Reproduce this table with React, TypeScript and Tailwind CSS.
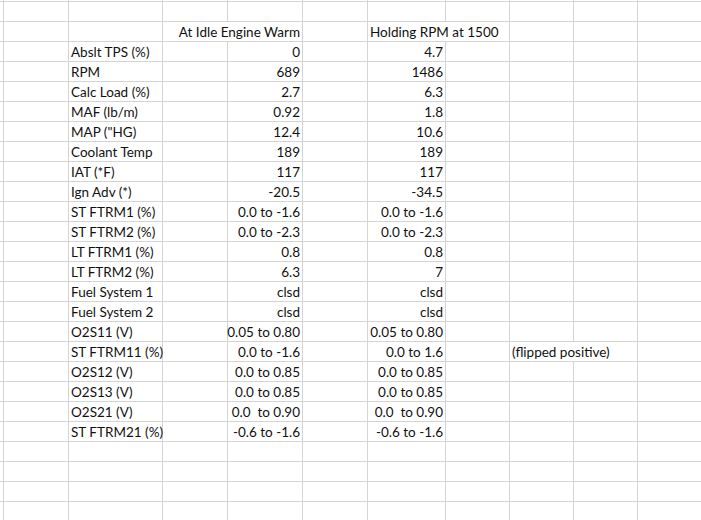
import React from 'react';

// column widths include the 1px right gridline
const COLS = [4, 65, 94, 65, 75, 65, 78, 64, 64, 64, 64];

interface Row {
  label: string;
  idle: string;
  hold: string;
  note?: string;
}

const rows: Row[] = [
  { label: 'Abslt TPS (%)', idle: '0', hold: '4.7' },
  { label: 'RPM', idle: '689', hold: '1486' },
  { label: 'Calc Load (%)', idle: '2.7', hold: '6.3' },
  { label: 'MAF (lb/m)', idle: '0.92', hold: '1.8' },
  { label: 'MAP ("HG)', idle: '12.4', hold: '10.6' },
  { label: 'Coolant Temp', idle: '189', hold: '189' },
  { label: 'IAT (*F)', idle: '117', hold: '117' },
  { label: 'Ign Adv (*)', idle: '-20.5', hold: '-34.5' },
  { label: 'ST FTRM1 (%)', idle: '0.0 to -1.6', hold: '0.0 to -1.6' },
  { label: 'ST FTRM2 (%)', idle: '0.0 to -2.3', hold: '0.0 to -2.3' },
  { label: 'LT FTRM1 (%)', idle: '0.8', hold: '0.8' },
  { label: 'LT FTRM2 (%)', idle: '6.3', hold: '7' },
  { label: 'Fuel System 1', idle: 'clsd', hold: 'clsd' },
  { label: 'Fuel System 2', idle: 'clsd', hold: 'clsd' },
  { label: 'O2S11 (V)', idle: '0.05 to 0.80', hold: '0.05 to 0.80' },
  { label: 'ST FTRM11 (%)', idle: '0.0 to -1.6', hold: '0.0 to 1.6', note: '(flipped positive)' },
  { label: 'O2S12 (V)', idle: '0.0 to 0.85', hold: '0.0 to 0.85' },
  { label: 'O2S13 (V)', idle: '0.0 to 0.85', hold: '0.0 to 0.85' },
  { label: 'O2S21 (V)', idle: '0.0  to 0.90', hold: '0.0  to 0.90' },
  { label: 'ST FTRM21 (%)', idle: '-0.6 to -1.6', hold: '-0.6 to -1.6' },
];

type Cell = { text?: string; align?: 'left' | 'right'; noLine?: boolean };

function SheetRow({ cells, tall = true }: { cells: Cell[]; tall?: boolean }) {
  return (
    <div className={`flex shrink-0 border-b border-[#d4d4d4] ${tall ? 'h-[20px]' : 'h-[2px]'}`}>
      {COLS.map((w, i) => {
        const c = cells[i] ?? {};
        return (
          <div
            key={i}
            style={{ width: w }}
            className={`relative shrink-0 flex items-end whitespace-pre ${
              c.noLine ? '' : 'border-r border-[#d4d4d4]'
            } ${c.align === 'right' ? 'justify-end pr-[2px]' : 'justify-start pl-[2px]'}`}
          >
            {c.text}
          </div>
        );
      })}
    </div>
  );
}

export default function App() {
  const empty: Cell[] = [];
  return (
    <div className="w-[701px] h-[520px] overflow-hidden bg-white text-[#111] text-[13.5px] leading-[17px] font-['Lato','Liberation_Sans',sans-serif] flex flex-col">
      <SheetRow cells={empty} tall={false} />
      <SheetRow cells={empty} />
      <SheetRow
        cells={[
          {},
          {},
          {},
          { noLine: true },
          { text: 'At Idle Engine Warm', align: 'right' },
          {},
          { text: 'Holding RPM at 1500', noLine: true },
        ]}
      />
      {rows.map((r) => (
        <SheetRow
          key={r.label}
          cells={[
            {},
            {},
            { text: r.label },
            {},
            { text: r.idle, align: 'right' },
            {},
            { text: r.hold, align: 'right' },
            {},
            r.note ? { text: r.note, noLine: true } : {},
          ]}
        />
      ))}
      {Array.from({ length: 4 }).map((_, i) => (
        <SheetRow key={i} cells={empty} />
      ))}
    </div>
  );
}
